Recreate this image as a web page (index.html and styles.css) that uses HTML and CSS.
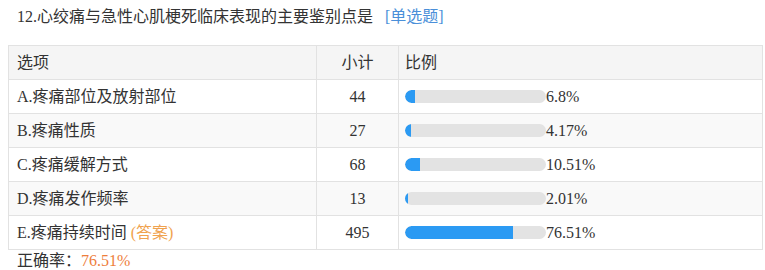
FILE: index.html
```html
<!DOCTYPE html>
<html lang="zh">
<head>
<meta charset="utf-8">
<link rel="stylesheet" href="styles.css">
</head>
<body>
<div class="title">12.心绞痛与急性心肌梗死临床表现的主要鉴别点是<span class="qtype">[单选题]</span></div>
<table class="stats">
  <colgroup><col class="c1"><col class="c2"><col class="c3"></colgroup>
  <thead>
    <tr><th>选项</th><th class="num">小计</th><th class="pct">比例</th></tr>
  </thead>
  <tbody>
    <tr><td>A.疼痛部位及放射部位</td><td class="num">44</td><td class="pct"><div class="ratio"><div class="track"><div class="fill" style="width:6.8%"></div></div><span>6.8%</span></div></td></tr>
    <tr><td>B.疼痛性质</td><td class="num">27</td><td class="pct"><div class="ratio"><div class="track"><div class="fill" style="width:4.17%"></div></div><span>4.17%</span></div></td></tr>
    <tr><td>C.疼痛缓解方式</td><td class="num">68</td><td class="pct"><div class="ratio"><div class="track"><div class="fill" style="width:10.51%"></div></div><span>10.51%</span></div></td></tr>
    <tr><td>D.疼痛发作频率</td><td class="num">13</td><td class="pct"><div class="ratio"><div class="track"><div class="fill" style="width:2.01%"></div></div><span>2.01%</span></div></td></tr>
    <tr><td>E.疼痛持续时间 <span class="answer">(答案)</span></td><td class="num">495</td><td class="pct"><div class="ratio"><div class="track"><div class="fill" style="width:76.51%"></div></div><span>76.51%</span></div></td></tr>
  </tbody>
</table>
<div class="footer">正确率：<span class="rate">76.51%</span></div>
</body>
</html>
```
FILE: styles.css
```css
html, body {
  margin: 0;
  padding: 0;
  background: #fff;
}
body {
  padding: 8px;
  font-family: "Liberation Serif", "Noto Sans CJK SC", serif;
  font-size: 16px;
  color: #333;
}
.title {
  padding-left: 9px;
  line-height: 18px;
  height: 18px;
}
.qtype {
  color: #4a8fd9;
  margin-left: 12px;
}
.stats {
  margin-top: 19px;
  border-collapse: collapse;
  width: 754px;
  table-layout: fixed;
}
.c1 { width: 308px; }
.c2 { width: 82px; }
.c3 { width: 364px; }
.stats th, .stats td {
  border: 1px solid #e2e2e2;
  height: 33px;
  padding: 0 8px;
  text-align: left;
  font-weight: normal;
  vertical-align: middle;
  line-height: 20px;
}
.stats th.pct, .stats td.pct {
  padding-left: 6px;
}
.stats th {
  background: #f5f5f5;
}
.stats tbody tr:nth-child(even) td {
  background: #f9f9f9;
}
.stats .num {
  text-align: center;
}
.ratio {
  display: flex;
  align-items: center;
}
.track {
  width: 141px;
  height: 13px;
  background: #e3e3e3;
  border-radius: 7px;
  overflow: hidden;
}
.fill {
  height: 100%;
  background: #2b9af3;
  border-radius: 7px 0 0 7px;
}
.answer {
  color: #f0a24e;
}
.footer {
  padding-left: 9px;
  line-height: 22px;
}
.rate {
  color: #ee7e3c;
}
```
